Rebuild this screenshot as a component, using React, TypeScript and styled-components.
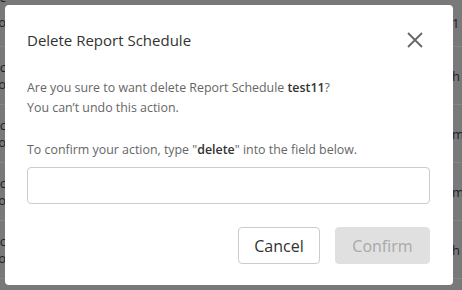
import styled, { createGlobalStyle } from "styled-components";

const GlobalStyle = createGlobalStyle`
  html, body {
    margin: 0;
    padding: 0;
  }
  body {
    width: 462px;
    height: 290px;
    overflow: hidden;
    background: #797979;
    font-family: "Open Sans", "Liberation Sans", sans-serif;
  }
`;

const Page = styled.div`
  position: relative;
  width: 462px;
  height: 290px;
  overflow: hidden;
`;

const Table = styled.div`
  display: grid;
  grid-template-rows: 47px repeat(5, 58px);
  color: #1e1e2a;
  font-size: 13px;
`;

const Row = styled.div`
  display: grid;
  grid-template-columns: 6px 1fr 14px;
  border-bottom: 1px solid #858585;
  box-sizing: border-box;
  overflow: hidden;
`;

const LeftCell = styled.div<{ $top?: boolean }>`
  display: flex;
  flex-direction: column;
  justify-content: ${(p) => (p.$top ? "flex-start" : "center")};
  margin-top: ${(p) => (p.$top ? -11 : 0)}px;
  overflow: ${(p) => (p.$top ? "visible" : "hidden")};
  white-space: nowrap;
  line-height: 17px;
  gap: ${(p) => (p.$top ? 8 : 0)}px;
`;

const Clip = styled.span<{ $top?: boolean }>`
  display: block;
  direction: ${(p) => (p.$top ? "ltr" : "rtl")};
  margin-left: ${(p) => (p.$top ? -16 : 0)}px;
  overflow: hidden;
`;

const RightCell = styled.div`
  display: flex;
  align-items: center;
  padding-left: 4px;
  overflow: hidden;
  white-space: nowrap;
`;

const Overlay = styled.div`
  position: absolute;
  inset: 0;
`;

const Modal = styled.div`
  position: absolute;
  left: 5px;
  top: 5px;
  width: 448px;
  height: 280px;
  box-sizing: border-box;
  background: #fff;
  border-radius: 4px;
  padding: 22px 23px 0 22px;
  display: flex;
  flex-direction: column;
  color: #666;
`;

const Header = styled.div`
  display: flex;
  align-items: center;
  justify-content: space-between;
  height: 26px;
`;

const Title = styled.h4`
  margin: 0;
  font-size: 15px;
  font-weight: 500;
  color: #323232;
`;

const CloseButton = styled.button`
  border: 0;
  background: none;
  padding: 0;
  margin-right: 6px;
  width: 18px;
  height: 18px;
  display: flex;
  align-items: center;
  justify-content: center;
  cursor: pointer;
`;

const Text = styled.p<{ $gap?: number }>`
  margin: ${(p) => p.$gap ?? 0}px 0 0;
  font-size: 12.4px;
  line-height: 20px;
  color: #666;

  & strong {
    font-weight: 600;
    color: #323232;
  }
`;

const Input = styled.input`
  margin-top: 7px;
  height: 37px;
  box-sizing: border-box;
  border: 1px solid #ccc;
  border-radius: 4px;
  font-family: inherit;
  font-size: 13px;
  padding: 0 10px;
  outline: none;
`;

const Footer = styled.div`
  display: flex;
  justify-content: flex-end;
  gap: 15px;
  margin-top: 23px;
`;

const Button = styled.button<{ $primary?: boolean }>`
  height: 37px;
  min-width: ${(p) => (p.$primary ? 95 : 82)}px;
  box-sizing: border-box;
  border-radius: 4px;
  font-family: inherit;
  font-size: 16px;
  font-weight: 500;
  padding: 0 15px;
  border: 1px solid ${(p) => (p.$primary ? "#e0e0e0" : "#ccc")};
  background: ${(p) => (p.$primary ? "#e0e0e0" : "#fff")};
  color: ${(p) => (p.$primary ? "#a8a8a8" : "#323232")};
  cursor: ${(p) => (p.$primary ? "not-allowed" : "pointer")};
`;

const rows = [
  { left: ["Backup", "o"], right: "1" },
  { left: ["Doc", "Info"], right: "h" },
  { left: ["Doc", "Info"], right: "m" },
  { left: ["Doc", "Info"], right: "m" },
  { left: ["Doc", "Info"], right: "h" },
  { left: ["Doc", "Info"], right: "" },
];

export default function App() {
  return (
    <Page>
      <GlobalStyle />
      <Table>
        {rows.map((r, i) => (
          <Row key={i}>
            <LeftCell $top={i === 0}>
              <Clip $top={i === 0}>{r.left[0]}</Clip>
              <Clip>{r.left[1]}</Clip>
            </LeftCell>
            <div />
            <RightCell>{r.right}</RightCell>
          </Row>
        ))}
      </Table>
      <Overlay>
        <Modal role="dialog">
          <Header>
            <Title>Delete Report Schedule</Title>
            <CloseButton aria-label="Close">
              <svg width="16" height="16" viewBox="0 0 16 16">
                <path d="M1 1 L15 15 M15 1 L1 15" stroke="#666" strokeWidth="1.8" />
              </svg>
            </CloseButton>
          </Header>
          <Text $gap={25}>
            Are you sure to want delete Report Schedule <strong>test11</strong>?
            <br />
            You can’t undo this action.
          </Text>
          <Text $gap={22}>
            To confirm your action, type "<strong>delete</strong>" into the field below.
          </Text>
          <Input />
          <Footer>
            <Button>Cancel</Button>
            <Button $primary disabled>
              Confirm
            </Button>
          </Footer>
        </Modal>
      </Overlay>
    </Page>
  );
}
